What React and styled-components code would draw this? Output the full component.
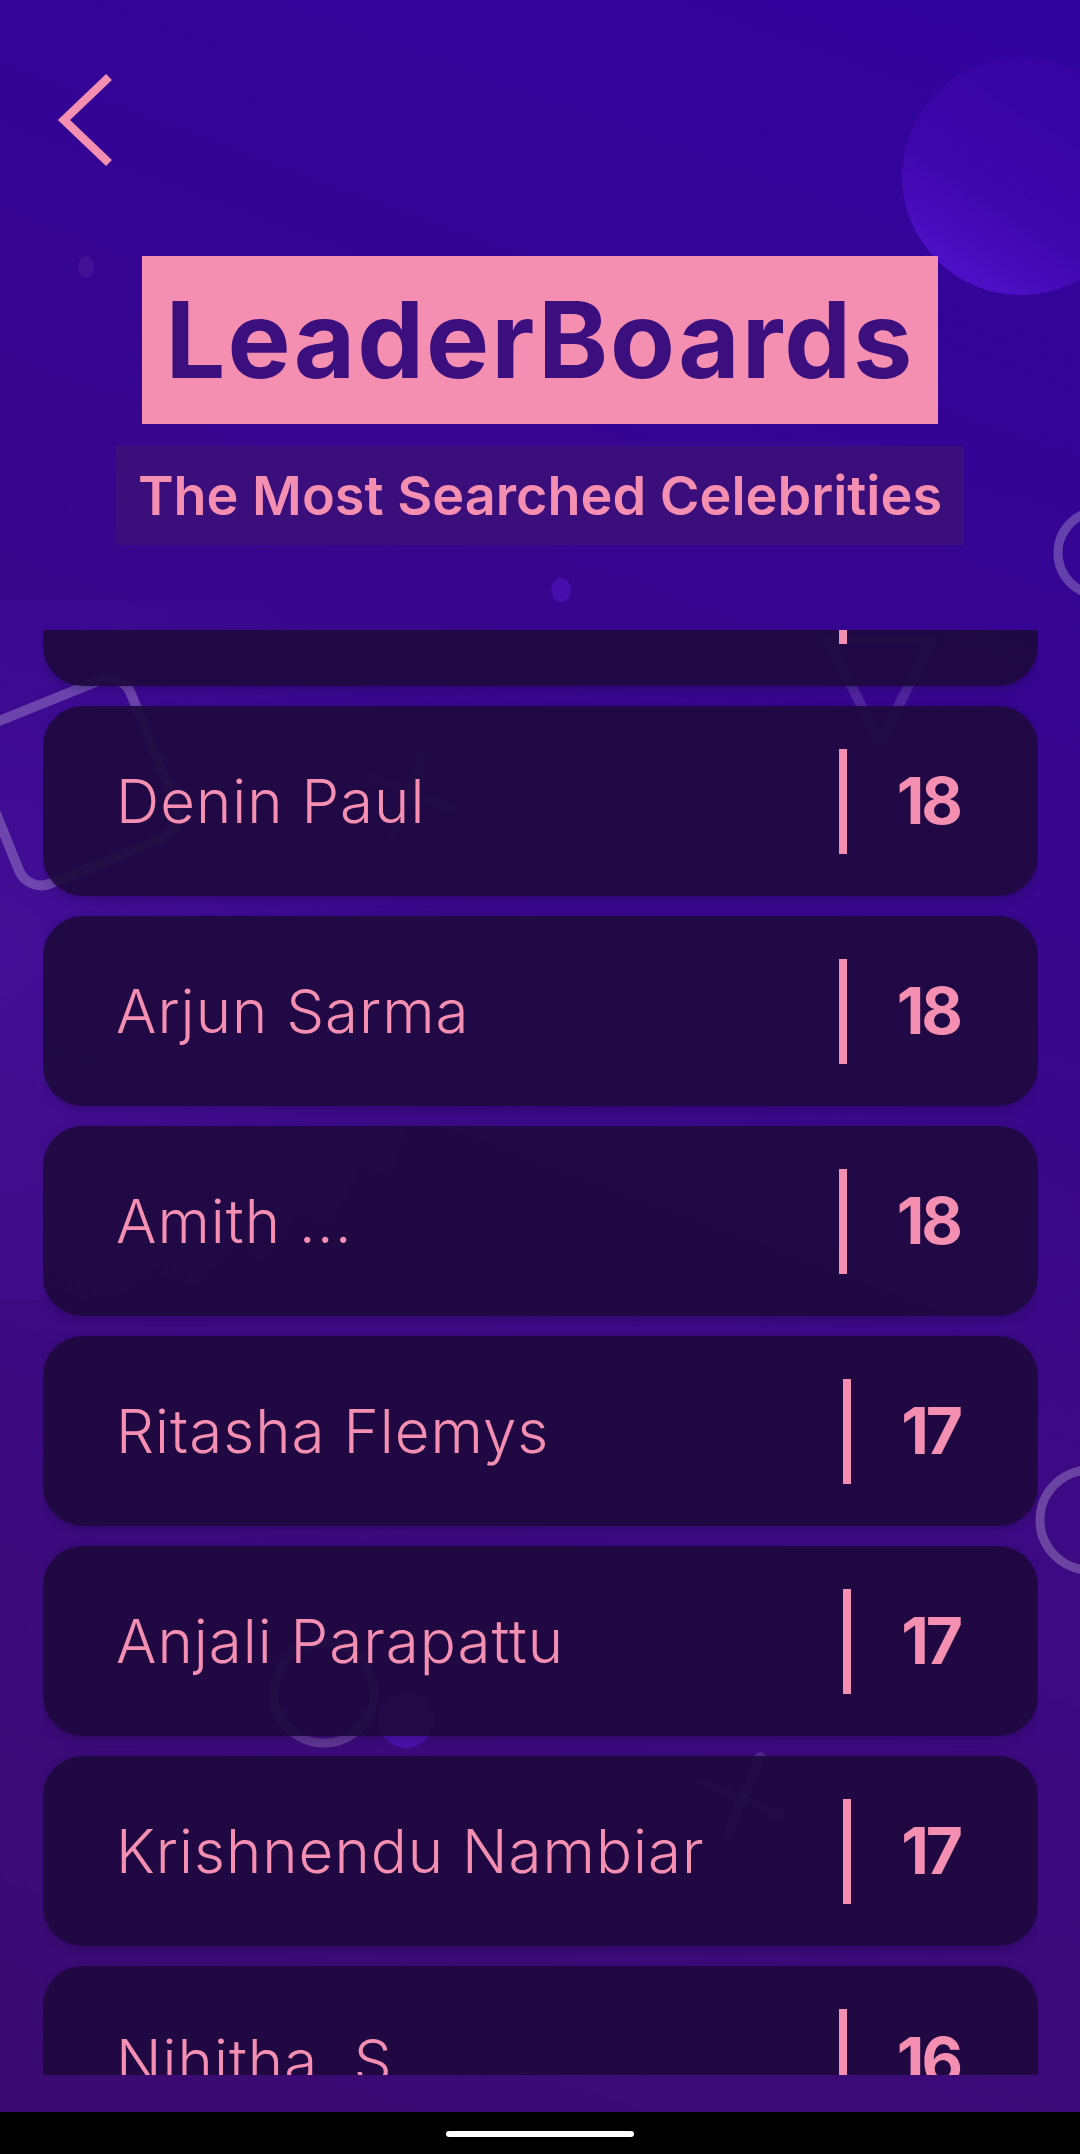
import React from "react";
import styled, { createGlobalStyle } from "styled-components";

const PINK = "#f48fb1";

const GlobalStyle = createGlobalStyle`
  html, body { margin: 0; padding: 0; background: #000; }
  body { font-family: Inter, "Noto Sans", sans-serif; }
  * { box-sizing: border-box; }
`;

const Screen = styled.div`
  position: relative;
  width: 1080px;
  height: 2154px;
  overflow: hidden;
  display: flex;
  flex-direction: column;
  background: linear-gradient(200deg, #31049f 0%, #36068f 30%, #3c0a84 60%, #3a0b70 100%);
`;

const Backdrop = styled.svg`
  position: absolute;
  left: 0;
  top: 0;
  z-index: 0;
  pointer-events: none;
`;

const Content = styled.div`
  position: relative;
  z-index: 1;
  flex: 1;
  display: flex;
  flex-direction: column;
  min-height: 0;
`;

const TopBar = styled.header`
  height: 256px;
  padding: 72px 0 0 57px;
`;

const BackButton = styled.button`
  display: block;
  width: 60px;
  height: 96px;
  padding: 0;
  border: 0;
  background: none;
  cursor: pointer;
`;

const Heading = styled.div`
  display: flex;
  flex-direction: column;
  align-items: center;
  gap: 22px;
`;

const TitleBox = styled.h1`
  margin: 0;
  width: 796px;
  height: 168px;
  display: flex;
  align-items: center;
  justify-content: center;
  background: ${PINK};
  color: #3b0f7d;
  font-family: Inter, "Noto Sans", sans-serif;
  font-weight: 700;
  font-size: 106px;
  line-height: 1;
  letter-spacing: 2px;
`;

const SubtitleBox = styled.h2`
  margin: 0;
  width: 848px;
  height: 99px;
  display: flex;
  align-items: center;
  justify-content: center;
  background: #3a0e7b;
  color: ${PINK};
  font-family: Inter, "Noto Sans", sans-serif;
  font-weight: 600;
  font-size: 54px;
  line-height: 1;
`;

const ListViewport = styled.div`
  margin: 85px 42px 0 43px;
  height: 1445px;
  overflow: hidden;
`;

const List = styled.ul`
  list-style: none;
  margin: ${(p) => p.$offset}px 0 0;
  padding: 0;
  display: flex;
  flex-direction: column;
  gap: 20px;
`;

const Card = styled.li`
  height: 190px;
  flex: none;
  display: flex;
  align-items: center;
  padding: 0 78px 0 73px;
  border-radius: 40px;
  background: rgba(30, 10, 62, 0.93);
  box-shadow: 0 3px 8px rgba(20, 0, 50, 0.25);
`;

const Name = styled.span`
  flex: 1;
  min-width: 0;
  color: ${PINK};
  font-family: Inter, "Noto Sans", sans-serif;
  font-weight: 300;
  font-size: 60px;
  line-height: 1;
  letter-spacing: 1px;
  white-space: pre;
`;

const ScoreGroup = styled.div`
  display: flex;
  align-items: center;
  gap: 50px;
`;

const Divider = styled.span`
  display: block;
  width: 8px;
  height: 105px;
  background: ${PINK};
`;

const Score = styled.span`
  color: ${PINK};
  font-family: Inter, "Noto Sans", sans-serif;
  font-weight: 650;
  font-size: 64px;
  line-height: 1;
  letter-spacing: -3px;
  visibility: ${(p) => (p.$hidden ? "hidden" : "visible")};
`;

const Spacer = styled.div`
  flex: 1;
`;

const NavBar = styled.div`
  height: 42px;
  background: #000;
  display: flex;
  align-items: center;
  justify-content: center;
`;

const HomePill = styled.span`
  width: 188px;
  height: 6px;
  margin-top: 2px;
  border-radius: 3px;
  background: #fff;
`;

const people = [
  { name: "", score: 18, hidden: true },
  { name: "Denin Paul", score: 18 },
  { name: "Arjun Sarma", score: 18 },
  { name: "Amith ...", score: 18 },
  { name: "Ritasha Flemys", score: 17 },
  { name: "Anjali Parapattu", score: 17 },
  { name: "Krishnendu Nambiar", score: 17 },
  { name: "Nihitha  S", score: 16 },
];

function Decorations() {
  const ring = "rgba(255,255,255,0.24)";
  const faint = "rgba(255,255,255,0.12)";
  return (
    <Backdrop width="1080" height="2154" viewBox="0 0 1080 2154">
      <defs>
        <linearGradient id="bubble" x1="0.85" y1="0" x2="0.2" y2="1">
          <stop offset="0" stopColor="#3404a0" />
          <stop offset="0.6" stopColor="#3c06aa" />
          <stop offset="1" stopColor="#5212cc" />
        </linearGradient>
        <radialGradient id="glow" cx="0" cy="0.5" r="0.75">
          <stop offset="0" stopColor="rgba(95,35,205,0.2)" />
          <stop offset="1" stopColor="rgba(95,35,205,0)" />
        </radialGradient>
      </defs>
      <rect x="0" y="600" width="600" height="700" fill="url(#glow)" />
      <circle cx="1021" cy="176" r="119" fill="url(#bubble)" />
      <ellipse cx="86" cy="267" rx="8" ry="11" fill="rgba(70,20,150,0.8)" />
      <ellipse cx="561" cy="590" rx="10" ry="12" fill="rgba(75,18,180,0.8)" />
      <circle cx="1100" cy="553" r="42" fill="none" stroke={ring} strokeWidth="9" />
      <rect
        x="-10"
        y="697"
        width="170"
        height="170"
        rx="24"
        fill="none"
        stroke={ring}
        strokeWidth="10"
        transform="rotate(-22 75 782)"
      />
      <g stroke={faint} strokeWidth="10" strokeLinecap="round">
        <line x1="370" y1="777" x2="450" y2="808" />
        <line x1="423" y1="758" x2="393" y2="835" />
        <line x1="706" y1="1783" x2="780" y2="1815" />
        <line x1="760" y1="1757" x2="728" y2="1835" />
      </g>
      <path
        d="M828 640 L932 640 L880 742 Z"
        fill="none"
        stroke={faint}
        strokeWidth="10"
        strokeLinejoin="round"
      />
      <circle cx="1090" cy="1520" r="50" fill="none" stroke={ring} strokeWidth="9" />
      <circle cx="324" cy="1693" r="50" fill="none" stroke="rgba(255,255,255,0.18)" strokeWidth="9" />
      <circle cx="406" cy="1720" r="28" fill="rgba(80,20,190,0.7)" />
    </Backdrop>
  );
}

export default function App() {
  return (
    <>
      <GlobalStyle />
      <Screen>
        <Decorations />
        <Content>
          <TopBar>
            <BackButton aria-label="Back">
              <svg width="60" height="96" viewBox="0 0 60 96">
                <polyline
                  points="52,5 7,48 52,91"
                  fill="none"
                  stroke={PINK}
                  strokeWidth="8.5"
                />
              </svg>
            </BackButton>
          </TopBar>
          <Heading>
            <TitleBox>LeaderBoards</TitleBox>
            <SubtitleBox>The Most Searched Celebrities</SubtitleBox>
          </Heading>
          <ListViewport>
            <List $offset={-134}>
              {people.map((p, i) => (
                <Card key={i}>
                  <Name>{p.name}</Name>
                  <ScoreGroup>
                    <Divider />
                    <Score $hidden={p.hidden}>{p.score}</Score>
                  </ScoreGroup>
                </Card>
              ))}
            </List>
          </ListViewport>
          <Spacer />
          <NavBar>
            <HomePill />
          </NavBar>
        </Content>
      </Screen>
    </>
  );
}
